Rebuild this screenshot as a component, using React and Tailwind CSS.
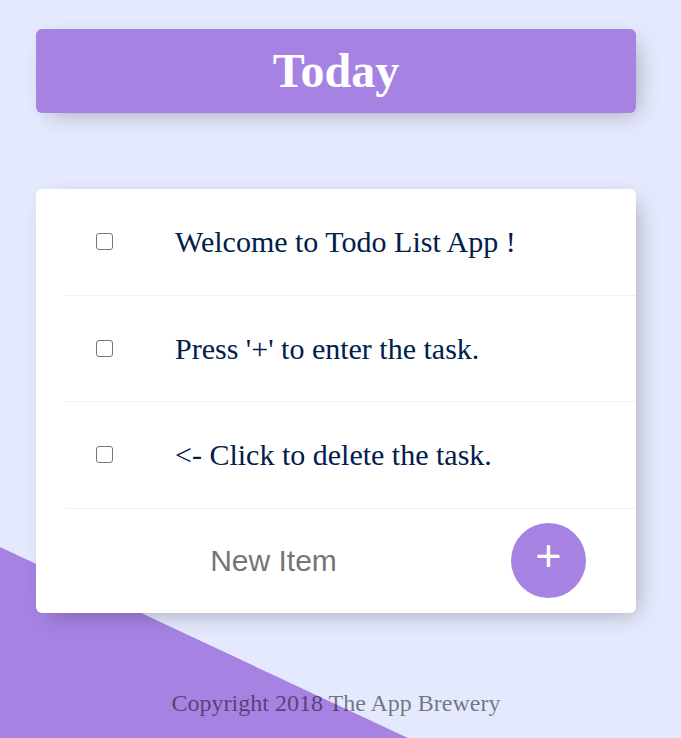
import { useState } from 'react';

const defaultItems = [
  { id: 1, text: 'Welcome to Todo List App !' },
  { id: 2, text: "Press '+' to enter the task." },
  { id: 3, text: '<- Click to delete the task.' },
];

function TodoItem({ text }) {
  const [done, setDone] = useState(false);

  return (
    <div className="ml-[30px] h-[106.5px] flex items-center border-b border-[#F1F1F1]">
      <input
        type="checkbox"
        checked={done}
        onChange={() => setDone(!done)}
        className="ml-[30px] w-[17px] h-[17px] shrink-0 appearance-none bg-white border-[1.5px] border-[#767676] rounded-[3px] checked:bg-[#A683E3]"
      />
      <p
        className={`ml-[62px] text-[30px] text-[#00204a] font-['Liberation_Serif',serif] ${done ? 'line-through decoration-[#A683E3]' : ''}`}
      >
        {text}
      </p>
    </div>
  );
}

function App() {
  const [items, setItems] = useState(defaultItems);
  const [newItem, setNewItem] = useState('');

  const handleAdd = (e) => {
    e.preventDefault();
    if (!newItem.trim()) return;
    setItems([...items, { id: Date.now(), text: newItem }]);
    setNewItem('');
  };

  return (
    <div className="relative h-[738px] overflow-hidden bg-[#E4E9FD] font-['Liberation_Serif',serif]">
      {/* diagonal purple background */}
      <div className="absolute inset-0 bg-[#A683E3] [clip-path:polygon(0_547px,408px_738px,0_738px)]" />

      <div className="relative w-[672px]">
        <div className="mx-auto mt-[29px] w-[600px] h-[84px] flex items-center justify-center bg-[#A683E3] rounded-[6px] shadow-[7px_7px_22px_-7px_rgba(0,0,0,0.3)]">
          <h1 className="text-white text-[48px] font-bold leading-none">Today</h1>
        </div>

        <div className="mx-auto mt-[76px] w-[600px] bg-white rounded-[6px] shadow-[7px_7px_22px_-7px_rgba(0,0,0,0.3)]">
          {items.map((item) => (
            <TodoItem key={item.id} text={item.text} />
          ))}

          <form onSubmit={handleAdd} className="h-[104.5px] flex items-center">
            <input
              type="text"
              value={newItem}
              onChange={(e) => setNewItem(e.target.value)}
              placeholder="New Item"
              autoComplete="off"
              className="w-[475px] h-[90px] text-center text-[30px] text-[#333] placeholder:text-[#757575] font-['Liberation_Sans',Arial,sans-serif] outline-none"
            />
            <button
              type="submit"
              className="w-[75px] h-[75px] shrink-0 rounded-full bg-[#A683E3] text-white text-[45px] leading-none pb-[11px] flex items-center justify-center font-['Liberation_Sans',Arial,sans-serif]"
            >
              +
            </button>
          </form>
        </div>

        <footer className="mt-[76px] text-center text-[24px] leading-[28px] text-black/50">
          Copyright 2018 The App Brewery
        </footer>
      </div>
    </div>
  );
}

export default App;
